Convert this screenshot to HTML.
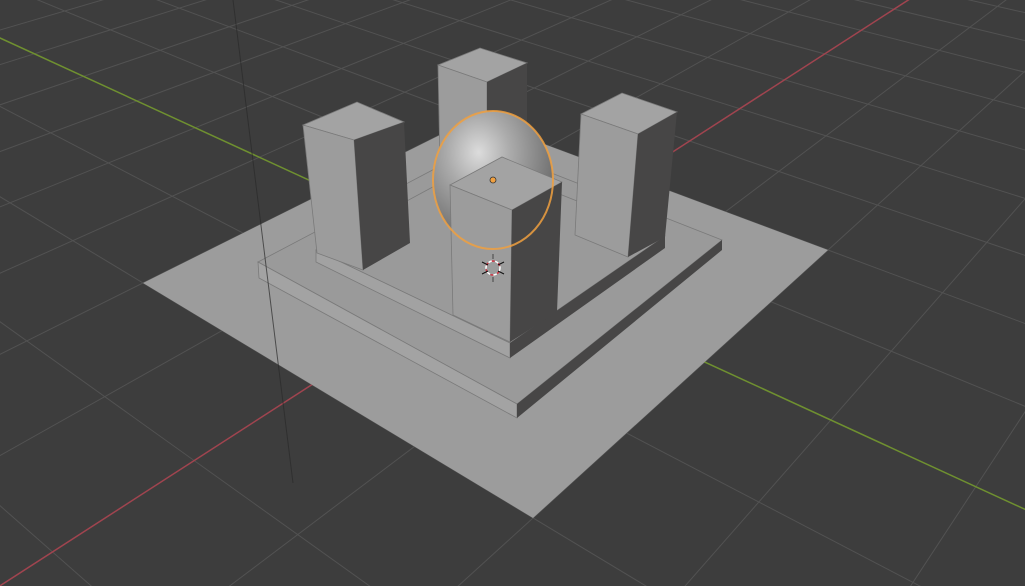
<!DOCTYPE html>
<html><head><meta charset="utf-8"><style>
html,body{margin:0;padding:0;background:#3d3d3d;width:1025px;height:586px;overflow:hidden;}
svg{display:block;}
</style></head><body>
<svg id="s" width="1025" height="586" viewBox="0 0 1025 586" xmlns="http://www.w3.org/2000/svg">
<defs>
<radialGradient id="sg" cx="0.38" cy="0.3" r="0.75">
<stop offset="0" stop-color="#dcdcdc"/>
<stop offset="0.35" stop-color="#ababab"/>
<stop offset="0.8" stop-color="#777"/>
<stop offset="1" stop-color="#5e5e5e"/>
</radialGradient>
</defs>
<rect width="1025" height="586" fill="#3d3d3d"/>
<g id="grid" stroke="#525252" stroke-width="1" fill="none"></g>
<g id="axes" fill="none" stroke-width="1.5"></g>
<polygon points="143,283 474,118 828,250 533,518" fill="#9c9c9c"/>
<polygon points="258,262 480,145 722,240 517,404" fill="#9a9a9a" stroke="#7a7a7a" stroke-width="0.8"/>
<polygon points="258,262 517,404 517,418 259,278" fill="#a3a3a3" stroke="#7a7a7a" stroke-width="0.8"/>
<polygon points="517,404 722,240 722,250 517,418" fill="#474646"/>
<polygon points="316,250 479,162 665,236 510,343" fill="#9a9a9a" stroke="#7a7a7a" stroke-width="0.8"/>
<polygon points="316,250 510,343 510,358 316,262" fill="#a2a2a2" stroke="#7a7a7a" stroke-width="0.8"/>
<polygon points="510,343 665,236 665,248 510,358" fill="#474646"/>
<polygon points="438,65 480,48 527,63 487,82" fill="#a3a3a3" stroke="#7a7a7a" stroke-width="0.8"/>
<polygon points="438,65 487,82 487,180 440,165" fill="#9c9c9c" stroke="#7a7a7a" stroke-width="0.8"/>
<polygon points="487,82 527,63 527,160 487,180" fill="#474646"/>
<ellipse cx="493" cy="180" rx="60" ry="69" fill="url(#sg)"/>
<polygon points="303,125 357,102 404,122 354,140" fill="#a3a3a3" stroke="#7a7a7a" stroke-width="0.8"/>
<polygon points="303,125 354,140 363,270 317,253" fill="#9c9c9c" stroke="#7a7a7a" stroke-width="0.8"/>
<polygon points="354,140 404,122 410,243 363,270" fill="#474646"/>
<polygon points="581,114 622,93 677,112 638,134" fill="#a3a3a3" stroke="#7a7a7a" stroke-width="0.8"/>
<polygon points="581,114 638,134 628,257 575,235" fill="#9c9c9c" stroke="#7a7a7a" stroke-width="0.8"/>
<polygon points="638,134 677,112 665,237 628,257" fill="#474646"/>
<polygon points="450,185 502,157 562,182 512,210" fill="#a3a3a3" stroke="#7a7a7a" stroke-width="0.8"/>
<polygon points="450,185 512,210 510,342 453,315" fill="#9c9c9c" stroke="#7a7a7a" stroke-width="0.8"/>
<polygon points="512,210 562,182 557,312 510,342" fill="#474646"/>
<ellipse cx="493" cy="180" rx="60" ry="69" fill="none" stroke="#f0a040" stroke-width="2" opacity="0.85"/>
<circle cx="493" cy="180" r="3" fill="#f0a040" stroke="#333" stroke-width="0.8"/>
<line x1="233" y1="0" x2="293" y2="483" stroke="#2a2a2a" stroke-width="1" opacity="0.7"/>
<g transform="translate(493,268)">
<circle r="7" fill="none" stroke="#fff" stroke-width="1.5" stroke-dasharray="4 3"/>
<circle r="7" fill="none" stroke="#d03040" stroke-width="1.5" stroke-dasharray="3 4" stroke-dashoffset="3.5"/>
<line x1="-11" y1="-6" x2="-5" y2="-3" stroke="#111"/>
<line x1="11" y1="-6" x2="5" y2="-3" stroke="#111"/>
<line x1="-11" y1="6" x2="-5" y2="3" stroke="#111"/>
<line x1="11" y1="6" x2="5" y2="3" stroke="#111"/>
<line x1="0" y1="-14" x2="0" y2="-9" stroke="#444"/>
<line x1="0" y1="9" x2="0" y2="14" stroke="#444"/>
</g>
</svg>
<script>
(function(){
var src=[[-1,-1],[-1,1],[1,1],[1,-1]];
var dst=[[143,283],[533,518],[828,250],[474,118]];
var A=[],b=[];
for(var i=0;i<4;i++){var u=src[i][0],v=src[i][1],x=dst[i][0],y=dst[i][1];
A.push([u,v,1,0,0,0,-u*x,-v*x]);b.push(x);
A.push([0,0,0,u,v,1,-u*y,-v*y]);b.push(y);}
var n=8;
for(var c=0;c<n;c++){var p=c;for(var r=c+1;r<n;r++)if(Math.abs(A[r][c])>Math.abs(A[p][c]))p=r;
var t=A[c];A[c]=A[p];A[p]=t;t=b[c];b[c]=b[p];b[p]=t;
for(var r=0;r<n;r++){if(r==c)continue;var f=A[r][c]/A[c][c];for(var k=c;k<n;k++)A[r][k]-=f*A[c][k];b[r]-=f*b[c];}}
var h=[];for(var i=0;i<n;i++)h.push(b[i]/A[i][i]);
function W(u,v){return h[6]*u+h[7]*v+1;}
function P(u,v){var w=W(u,v);return [(h[0]*u+h[1]*v+h[2])/w,(h[3]*u+h[4]*v+h[5])/w];}
var R=40,eps=0.06,s=0.5;
function seg(u0,v0,du,dv){
var w0=W(u0,v0), wd=h[6]*du+h[7]*dv;
var lo=-R,hi=R;
if(Math.abs(wd)>1e-9){var tc=(eps-w0)/wd; if(wd>0)lo=Math.max(lo,tc); else hi=Math.min(hi,tc);}
else if(w0<eps)return null;
if(lo>=hi)return null;
var a=P(u0+lo*du,v0+lo*dv),c=P(u0+hi*du,v0+hi*dv);
return [a,c];}
var g=document.getElementById('grid'),ax=document.getElementById('axes');
var NS='http://www.w3.org/2000/svg';
function L(parent,sg,col){if(!sg)return;var l=document.createElementNS(NS,'line');
l.setAttribute('x1',sg[0][0].toFixed(1));l.setAttribute('y1',sg[0][1].toFixed(1));
l.setAttribute('x2',sg[1][0].toFixed(1));l.setAttribute('y2',sg[1][1].toFixed(1));
if(col)l.setAttribute('stroke',col);parent.appendChild(l);}
var N=Math.ceil(R/s);
for(var i=-N;i<=N;i++){if(i==0)continue;var c=i*s;
L(g,seg(c,0,0,1));L(g,seg(0,c,1,0));}
L(ax,seg(0,0,1,0),'#a0444f');
L(ax,seg(0,0,0,1),'#6f9030');
})();
</script>
</body></html>
